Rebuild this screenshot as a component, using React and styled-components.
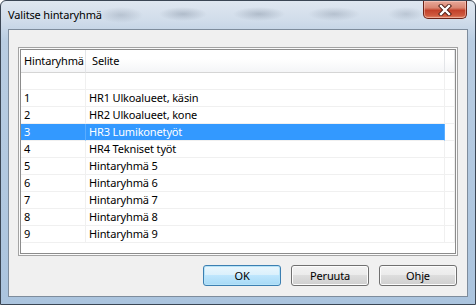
import React from 'react'
import styled, {createGlobalStyle} from 'styled-components'

const GlobalStyle = createGlobalStyle`
  html, body {
    margin: 0;
    padding: 0;
    background: #fff;
  }
  * {
    box-sizing: border-box;
  }
`

const Window = styled.div`
  width: 476px;
  height: 305px;
  display: flex;
  flex-direction: column;
  border: 1px solid #3b4654;
  border-radius: 6px 6px 0 0;
  overflow: hidden;
  font-family: "Noto Sans", "Open Sans", sans-serif;
  letter-spacing: -0.15px;
  background:
    radial-gradient(ellipse 22px 8px at 120px 14px, rgba(80, 95, 115, 0.22), transparent),
    radial-gradient(ellipse 24px 7px at 182px 13px, rgba(80, 95, 115, 0.28), transparent),
    radial-gradient(ellipse 26px 7px at 258px 13px, rgba(80, 95, 115, 0.28), transparent),
    radial-gradient(ellipse 26px 7px at 333px 13px, rgba(80, 95, 115, 0.24), transparent),
    radial-gradient(ellipse 18px 7px at 405px 13px, rgba(80, 95, 115, 0.2), transparent),
    linear-gradient(180deg, #dfe7f0 0px, #d0dcea 20px, #b9cde2 40px, #abc4de 100%);
`

const TitleBar = styled.div`
  height: 28px;
  flex: none;
  display: flex;
  justify-content: space-between;
  align-items: flex-start;
  padding-left: 7px;
`

const Title = styled.div`
  font-size: 11px;
  line-height: 28px;
  color: #000;
`

const CloseButton = styled.div`
  width: 44px;
  height: 18px;
  margin-right: 8px;
  display: flex;
  align-items: center;
  justify-content: center;
  border: 1px solid #6b2318;
  border-top: none;
  border-radius: 0 0 5px 5px;
  background: linear-gradient(180deg, #e9a99a 0%, #d98672 40%, #c2412a 55%, #cf5a3f 85%, #e28a6c 100%);
  box-shadow: inset 0 0 0 1px rgba(255, 220, 210, 0.45);
`

const Client = styled.div`
  flex: 1;
  margin: 0 7px 7px 7px;
  border: 1px solid #7e8c9c;
  background: #f0f0f0;
  display: flex;
  flex-direction: column;
  padding: 17px 9px 0 9px;
`

const ListOuter = styled.div`
  height: 209px;
  border: 1px solid #a3a3a3;
  padding: 1px;
  background: #fbfbfb;
`

const ListInner = styled.div`
  height: 100%;
  border: 1px solid #8c8c8c;
  background: #fff;
  overflow: hidden;
`

const Row = styled.div`
  display: grid;
  grid-template-columns: 65px 359px 1fr;
  height: ${({h}) => h || 17}px;
`

const HeaderCell = styled.div`
  font-size: 11px;
  line-height: 22px;
  color: #000;
  padding-left: ${({pad}) => pad}px;
  background: linear-gradient(180deg, #ffffff 0%, #ffffff 40%, #f4f5f7 100%);
  border-bottom: 1px solid #d5d5d5;
  border-right: 1px solid #e3e5e8;
  white-space: nowrap;
  overflow: hidden;
`

const Cell = styled.div`
  font-size: 11px;
  line-height: 16px;
  padding-left: ${({pad}) => pad}px;
  white-space: nowrap;
  color: ${({selected}) => (selected ? '#fff' : '#000')};
  background: ${({selected}) => (selected ? '#3399ff' : 'transparent')};
  border-bottom: 1px solid #f0f0f0;
  border-right: 1px solid ${({selected}) => (selected ? '#5aadff' : '#f0f0f0')};
`

const ButtonRow = styled.div`
  display: flex;
  justify-content: flex-end;
  gap: 10px;
  margin-top: 9px;
  padding-right: 1px;
`

const Button = styled.div`
  width: 78px;
  height: 21px;
  display: flex;
  align-items: center;
  justify-content: center;
  font-size: 11px;
  color: #000;
  border-radius: 3px;
  border: 1px solid ${({primary}) => (primary ? '#3c7fb1' : '#707070')};
  background: ${({primary}) => primary
    ? 'linear-gradient(180deg, #eaf6fd 0%, #d9f0fc 50%, #bee6fd 50%, #a7d9f5 100%)'
    : 'linear-gradient(180deg, #f2f2f2 0%, #ebebeb 50%, #dddddd 50%, #cfcfcf 100%)'};
  box-shadow: inset 0 0 0 1px ${({primary}) => (primary ? '#b6e3f8' : '#fcfcfc')};
`

const rows = [
  ['1', 'HR1 Ulkoalueet, käsin'],
  ['2', 'HR2 Ulkoalueet, kone'],
  ['3', 'HR3 Lumikonetyöt'],
  ['4', 'HR4 Tekniset työt'],
  ['5', 'Hintaryhmä 5'],
  ['6', 'Hintaryhmä 6'],
  ['7', 'Hintaryhmä 7'],
  ['8', 'Hintaryhmä 8'],
  ['9', 'Hintaryhmä 9'],
]

function CloseIcon() {
  return (
    <svg width="14" height="12" viewBox="0 0 14 12">
      <path d="M3 2 L11 10 M11 2 L3 10" stroke="#4a1a12" strokeWidth="4.2" strokeLinecap="square" />
      <path d="M3 2 L11 10 M11 2 L3 10" stroke="#fff" strokeWidth="2.4" strokeLinecap="square" />
    </svg>
  )
}

export default function App() {
  return (
    <>
      <GlobalStyle />
      <Window>
        <TitleBar>
          <Title>Valitse hintaryhmä</Title>
          <CloseButton><CloseIcon /></CloseButton>
        </TitleBar>
        <Client>
          <ListOuter>
            <ListInner>
              <Row h={23}>
                <HeaderCell pad={3}>Hintaryhmä</HeaderCell>
                <HeaderCell pad={6}>Selite</HeaderCell>
                <HeaderCell pad={0} />
              </Row>
              <Row>
                <Cell pad={3} />
                <Cell pad={3} />
                <Cell pad={0} />
              </Row>
              {rows.map(([id, text]) => {
                const selected = id === '3'
                return (
                  <Row key={id}>
                    <Cell pad={3} selected={selected}>{id}</Cell>
                    <Cell pad={3} selected={selected}>{text}</Cell>
                    <Cell pad={0} />
                  </Row>
                )
              })}
            </ListInner>
          </ListOuter>
          <ButtonRow>
            <Button primary>OK</Button>
            <Button>Peruuta</Button>
            <Button>Ohje</Button>
          </ButtonRow>
        </Client>
      </Window>
    </>
  )
}
